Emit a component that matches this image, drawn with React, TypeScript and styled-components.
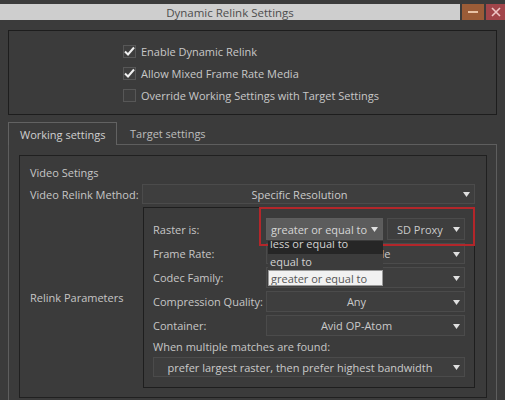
import React from "react";
import styled, { createGlobalStyle } from "styled-components";

const Global = createGlobalStyle`
  html, body { margin: 0; padding: 0; background: #3b3b3b; }
  * { box-sizing: border-box; }
`;

const Window = styled.div`
  width: 505px;
  height: 400px;
  overflow: hidden;
  background: #3b3b3b;
  font-family: "Open Sans", "Noto Sans", sans-serif;
  font-size: 11px;
  color: #c6c6c6;
  padding-top: 4px;
`;

const TitleBar = styled.div`
  display: flex;
  height: 16px;
`;

const TitleText = styled.div`
  flex: 1;
  background: #cecece;
  color: #4d4d4d;
  font-size: 11.5px;
  display: flex;
  align-items: center;
  justify-content: center;
  height: 16px;
`;

const WinButton = styled.div<{ $bg: string; $w: number }>`
  width: ${(p) => p.$w}px;
  margin-left: 2px;
  background: ${(p) => p.$bg};
  display: flex;
  align-items: center;
  justify-content: center;
`;

const Body = styled.div`
  padding: 0 8px;
`;

const OptionsGroup = styled.div`
  margin-top: 10px;
  height: 85px;
  border: 1px solid #1d1d1d;
  padding: 9px 0 0 114px;
  display: flex;
  flex-direction: column;
`;

const CheckRow = styled.label`
  display: flex;
  align-items: center;
  height: 22px;
  gap: 5px;
  color: #c8c8c8;
  font-size: 11px;
`;

const Box = styled.span`
  width: 13px;
  height: 13px;
  border: 1px solid #575757;
  background: #3e3e3e;
  display: flex;
  align-items: center;
  justify-content: center;
`;

const TabBar = styled.div`
  margin-top: 7px;
  display: flex;
  height: 22px;
  position: relative;
  z-index: 1;
`;

const Tab = styled.div<{ $active?: boolean }>`
  height: ${(p) => (p.$active ? "23px" : "22px")};
  padding: 0 0 0 ${(p) => (p.$active ? 11 : 13)}px;
  width: ${(p) => (p.$active ? "109px" : "auto")};
  display: flex;
  align-items: center;
  font-size: 11px;
  color: ${(p) => (p.$active ? "#d0d0d0" : "#bdbdbd")};
  background: #3b3b3b;
  border: ${(p) => (p.$active ? "1px solid #626262" : "none")};
  border-bottom: none;
`;

const TabPane = styled.div`
  border: 1px solid #5e5e5e;
  padding: 10px 9px 0 10px;
  height: 270px;
`;

const InnerGroup = styled.div`
  border: 1px solid #202020;
  padding: 10px 11px 9px 10px;
  display: flex;
  flex-direction: column;
`;

const SectionTitle = styled.div`
  height: 14px;
  line-height: 14px;
  font-size: 11px;
`;

const FieldRow = styled.div`
  display: flex;
  align-items: center;
  margin-top: 4px;
`;

const RowLabel = styled.div<{ $w: number }>`
  width: ${(p) => p.$w}px;
  flex: none;
  font-size: 11px;
  white-space: nowrap;
`;

const Select = styled.div<{ $align?: "left" | "center"; $hi?: boolean; $h?: number; $w?: number; $pl?: number }>`
  position: relative;
  height: ${(p) => p.$h ?? 20}px;
  ${(p) => (p.$w ? `width: ${p.$w}px; flex: none;` : "flex: 1;")}
  border: 1px solid ${(p) => (p.$hi ? "#5e5e5e" : "#4b4b4b")};
  background: ${(p) => (p.$hi ? "#5c5c5c" : "#3e3e3e")};
  display: flex;
  align-items: center;
  justify-content: ${(p) => (p.$align === "left" ? "flex-start" : "center")};
  padding: ${(p) => (p.$align === "left" ? `0 12px 0 ${p.$pl ?? 4}px` : "0 18px 0 0")};
  font-size: 11px;
  color: ${(p) => (p.$hi ? "#d6d6d6" : "#cacaca")};
  white-space: nowrap;
`;

const Arrow = styled.svg`
  position: absolute;
  right: 4px;
  top: 50%;
  margin-top: -2px;
`;

const RelinkRow = styled.div`
  display: flex;
  align-items: center;
  margin-top: 3px;
`;

const RelinkBox = styled.div`
  position: relative;
  flex: 1;
  border: 1px solid #1e1e1e;
  padding: 10px 9px 10px 9px;
  display: flex;
  flex-direction: column;
`;

const ParamRow = styled.div<{ $h?: number; $mt?: number }>`
  display: flex;
  align-items: center;
  height: ${(p) => p.$h ?? 21}px;
  margin-top: ${(p) => p.$mt ?? 3}px;
`;

const ParamLabel = styled.div`
  width: 113px;
  flex: none;
  font-size: 11px;
  white-space: nowrap;
`;

const ControlCell = styled.div`
  flex: 1;
  display: flex;
  gap: 4px;
  height: 100%;
  position: relative;
`;

const Note = styled.div`
  margin-top: 4px;
  height: 14px;
  line-height: 14px;
  font-size: 11px;
`;

const WideSelect = styled(Select)`
  margin-top: 3px;
  flex: none;
`;

const Popup = styled.div`
  position: absolute;
  left: 2px;
  top: 23px;
  width: 115px;
  z-index: 7;
  display: flex;
  flex-direction: column;
  background: #333;
`;

const PopupItem = styled.div<{ $kind: "dark" | "plain" | "sel" }>`
  height: ${(p) => (p.$kind === "dark" ? 13 : 16)}px;
  line-height: ${(p) => (p.$kind === "dark" ? 13 : 15)}px;
  overflow: hidden;
  padding-left: 2px;
  font-size: 11px;
  background: ${(p) => (p.$kind === "dark" ? "#262626" : p.$kind === "sel" ? "#f1f1f1" : "#3c3c3c")};
  color: ${(p) => (p.$kind === "sel" ? "#555" : "#d2d2d2")};
  border: ${(p) => (p.$kind === "sel" ? "1px solid #9a9a9a" : "none")};
`;

const ItemText = styled.span<{ $shift?: number }>`
  display: block;
  margin-top: ${(p) => p.$shift ?? 0}px;
`;

const Highlight = styled.div`
  position: absolute;
  left: 115px;
  top: -1px;
  width: 216px;
  height: 39px;
  border: 2px solid #b3262a;
  pointer-events: none;
  z-index: 6;
`;

const DownArrow = () => (
  <Arrow width="7" height="5" viewBox="0 0 7 5">
    <path d="M0 0 H7 L3.5 5 Z" fill="#e0e0e0" />
  </Arrow>
);

const Check = () => (
  <svg width="11" height="10" viewBox="0 0 11 10">
    <path d="M1 5.5 L4 8.5 L10 1.5" stroke="#f0f0f0" strokeWidth="2" fill="none" />
  </svg>
);

const options = [
  { label: "Enable Dynamic Relink", checked: true },
  { label: "Allow Mixed Frame Rate Media", checked: true },
  { label: "Override Working Settings with Target Settings", checked: false },
];

export default function App() {
  return (
    <Window>
      <Global />
      <TitleBar>
        <TitleText>Dynamic Relink Settings</TitleText>
        <WinButton $bg="#9b5c37" $w={22}>
          <svg width="10" height="3" viewBox="0 0 10 3">
            <rect x="0" y="0" width="10" height="2" fill="#e8c2a4" />
          </svg>
        </WinButton>
        <WinButton $bg="#a2454a" $w={19}>
          <svg width="10" height="10" viewBox="0 0 10 10">
            <path d="M1 1 L9 9 M9 1 L1 9" stroke="#f0c6c6" strokeWidth="1.6" />
          </svg>
        </WinButton>
      </TitleBar>
      <Body>
        <OptionsGroup>
          {options.map((o) => (
            <CheckRow key={o.label}>
              <Box>{o.checked && <Check />}</Box>
              {o.label}
            </CheckRow>
          ))}
        </OptionsGroup>
        <TabBar>
          <Tab $active>Working settings</Tab>
          <Tab>Target settings</Tab>
        </TabBar>
        <TabPane>
          <InnerGroup>
            <SectionTitle>Video Setings</SectionTitle>
            <FieldRow>
              <RowLabel $w={112}>Video Relink Method:</RowLabel>
              <Select>
                Specific Resolution
                <DownArrow />
              </Select>
            </FieldRow>
            <RelinkRow>
              <RowLabel $w={113}>Relink Parameters</RowLabel>
              <RelinkBox>
                <Highlight />
                <ParamRow $h={22} $mt={0}>
                  <ParamLabel>Raster is:</ParamLabel>
                  <ControlCell>
                    <Select $hi $align="left" $h={22} $w={117}>
                      greater or equal to
                      <DownArrow />
                    </Select>
                    <Select $h={22} $w={78} $align="left" $pl={9}>
                      SD Proxy
                      <DownArrow />
                    </Select>
                    <Popup>
                      <PopupItem $kind="dark">
                        <ItemText $shift={-4}>less or equal to</ItemText>
                      </PopupItem>
                      <PopupItem $kind="plain">
                        <ItemText>equal to</ItemText>
                      </PopupItem>
                      <PopupItem $kind="sel">
                        <ItemText>greater or equal to</ItemText>
                      </PopupItem>
                    </Popup>
                  </ControlCell>
                </ParamRow>
                <ParamRow>
                  <ParamLabel>Frame Rate:</ParamLabel>
                  <ControlCell>
                    <Select $h={21}>
                      Any Available
                      <DownArrow />
                    </Select>
                  </ControlCell>
                </ParamRow>
                <ParamRow>
                  <ParamLabel>Codec Family:</ParamLabel>
                  <ControlCell>
                    <Select $h={21}>
                      Any
                      <DownArrow />
                    </Select>
                  </ControlCell>
                </ParamRow>
                <ParamRow>
                  <ParamLabel>Compression Quality:</ParamLabel>
                  <ControlCell>
                    <Select $h={21}>
                      Any
                      <DownArrow />
                    </Select>
                  </ControlCell>
                </ParamRow>
                <ParamRow>
                  <ParamLabel>Container:</ParamLabel>
                  <ControlCell>
                    <Select $h={21}>
                      Avid OP-Atom
                      <DownArrow />
                    </Select>
                  </ControlCell>
                </ParamRow>
                <Note>When multiple matches are found:</Note>
                <WideSelect $h={20}>
                  prefer largest raster, then prefer highest bandwidth
                  <DownArrow />
                </WideSelect>
              </RelinkBox>
            </RelinkRow>
          </InnerGroup>
        </TabPane>
      </Body>
    </Window>
  );
}
